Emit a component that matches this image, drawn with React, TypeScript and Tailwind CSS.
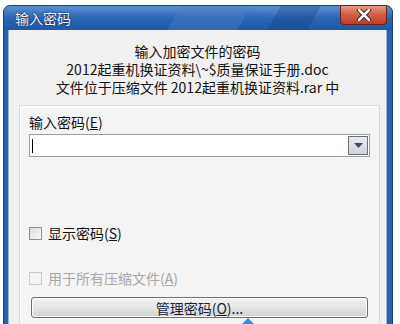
import React from "react";

const cjk = { fontFamily: '"Noto Sans CJK SC", "Noto Sans", sans-serif' };

function CheckBox({ disabled }: { disabled?: boolean }) {
  return (
    <span
      className={
        "inline-block w-[13px] h-[13px] border " +
        (disabled
          ? "border-[#c9c9c9] bg-[#f4f4f4]"
          : "border-[#8e8f8f] bg-gradient-to-br from-[#dcdcdc] to-[#fbfbfb]")
      }
    />
  );
}

export default function App() {
  return (
    <div className="relative w-[400px] h-[324px] bg-white overflow-hidden" style={cjk}>
      <div className="ml-[3px] mt-[5px] w-[390px] h-[330px] flex flex-col rounded-t-[7px] border border-[#20406e] bg-[#2563ae] pb-0">
        {/* title bar */}
        <div className="relative h-[24px] flex items-start justify-between rounded-t-[6px] bg-gradient-to-b from-[#5a92d6] via-[#2a66b2] to-[#1c5aa6] overflow-hidden">
          <div className="absolute left-[170px] top-0 w-[70px] h-[24px] bg-[#4a83c8] opacity-40 skew-x-[-30deg]" />
          <div className="absolute left-[270px] top-0 w-[40px] h-[24px] bg-[#153f7a] opacity-30 skew-x-[-30deg]" />
          <span
            className="relative ml-[11px] mt-[2px] text-[14px] leading-[20px] text-[#eef4fb]"
            style={{ textShadow: "0 0 2px #0d2d5c, 0 0 1px #0d2d5c" }}
          >
            输入密码
          </span>
          <div className="relative mr-[5px] w-[47px] h-[19px] flex items-center justify-center rounded-b-[4px] border border-[#6b2118] border-t-0 bg-gradient-to-b from-[#e49a88] via-[#cf5b43] to-[#c23c26]">
            <svg width="16" height="12" viewBox="0 0 16 12">
              <path d="M3 1 L13 11 M13 1 L3 11" stroke="#3a1410" strokeWidth="4.5" strokeLinecap="round" />
              <path d="M3 1 L13 11 M13 1 L3 11" stroke="#ffffff" strokeWidth="2.6" strokeLinecap="round" />
            </svg>
          </div>
        </div>
        {/* client area */}
        <div className="flex-1 ml-[4px] mr-[5px] border-l border-r border-[#9bb4d4] bg-[#f0f0f0] flex flex-col">
          <div className="pt-[12px] flex flex-col items-center text-[14px] leading-[18px] text-[#111]">
            <span>输入加密文件的密码</span>
            <span>2012起重机换证资料\~$质量保证手册.doc</span>
            <span>文件位于压缩文件 2012起重机换证资料.rar 中</span>
          </div>
          {/* pane */}
          <div className="mt-[9px] ml-[10px] mr-[6px] flex-1 border-t border-l border-r border-[#d9d9d9] bg-[#f4f4f4] shadow-[inset_1px_1px_0_#ffffff] flex flex-col pl-[9px] pr-[9px]">
            <div className="pt-[7px] text-[14px] leading-[18px] text-[#111]">
              输入密码(<u>E</u>)
            </div>
            <div className="mt-[3px] h-[23px] flex items-center border border-[#9aa0a6] bg-white">
              <span className="ml-[2px] w-[1px] h-[14px] bg-black" />
              <div className="ml-auto mr-[1px] w-[20px] h-[19px] flex items-center justify-center border border-[#6d7279] bg-gradient-to-b from-[#e9ecf0] to-[#cdd3da]">
                <svg width="9" height="5" viewBox="0 0 9 5">
                  <path d="M0 0 L9 0 L4.5 5 Z" fill="#3e4d63" />
                </svg>
              </div>
            </div>
            <div className="mt-[67px] flex items-center gap-[6px] text-[14px] leading-[18px] text-[#111]">
              <CheckBox />
              <span>显示密码(<u>S</u>)</span>
            </div>
            <div className="mt-[27px] flex items-center gap-[6px] text-[14px] leading-[18px] text-[#a8a8a8]">
              <CheckBox disabled />
              <span>用于所有压缩文件(<u>A</u>)</span>
            </div>
            <button className="mt-[10px] ml-[2px] mr-[2px] h-[21px] flex items-center justify-center rounded-[3px] border border-[#707070] bg-gradient-to-b from-[#f3f3f3] via-[#e6e6e6] to-[#d2d2d2] text-[14px] leading-[18px] text-[#1a1f3a] shadow-[inset_0_0_0_1px_#fbfbfb]">
              管理密码(<u>O</u>)...
            </button>
          </div>
        </div>
      </div>
      <svg className="absolute left-[240px] top-[318px]" width="16" height="8" viewBox="0 0 16 8">
        <path d="M8 0 L16 8 L0 8 Z" fill="#2f8fd8" />
      </svg>
    </div>
  );
}
